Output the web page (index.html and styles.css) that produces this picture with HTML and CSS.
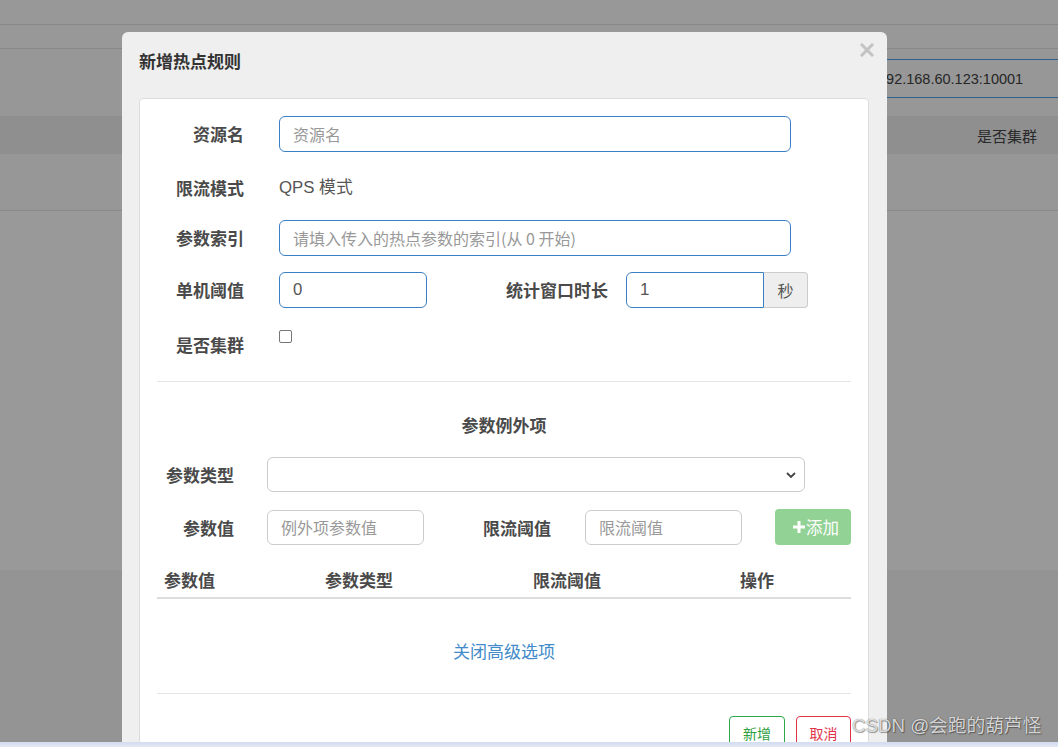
FILE: index.html
```html
<!DOCTYPE html>
<html lang="zh-CN">
<head>
<meta charset="utf-8">
<title>新增热点规则</title>
<link rel="stylesheet" href="styles.css">
</head>
<body>
<div class="page">
  <div class="bg-bar bg-top"></div>
  <div class="bg-bar bg-sub"></div>
  <div class="bg-toolbar">
    <div class="bg-ip">192.168.60.123:10001</div>
  </div>
  <div class="bg-thead"><span>是否集群</span></div>
  <div class="bg-row"></div>
  <div class="bg-panel"></div>
  <div class="bg-rest"></div>
</div>

<div class="modal">
  <div class="modal-header">
    <h4 class="modal-title">新增热点规则</h4>
    <svg class="close" width="14" height="14" viewBox="0 0 14 14"><path d="M2 2L12 12M12 2L2 12" stroke="#c3c3c3" stroke-width="3" stroke-linecap="square"/></svg>
  </div>
  <div class="card">
    <div class="form-row r1">
      <label class="lbl">资源名</label>
      <div class="input focus w512"><span class="ph">资源名</span></div>
    </div>
    <div class="form-row r2">
      <label class="lbl">限流模式</label>
      <span class="static">QPS 模式</span>
    </div>
    <div class="form-row r3">
      <label class="lbl">参数索引</label>
      <div class="input focus w512"><span class="ph">请填入传入的热点参数的索引(从 0 开始)</span></div>
    </div>
    <div class="form-row r4">
      <label class="lbl">单机阈值</label>
      <div class="input focus w148"><span class="val">0</span></div>
      <label class="lbl lbl-wide">统计窗口时长</label>
      <div class="input-group">
        <div class="input focus w138 grp"><span class="val">1</span></div>
        <span class="addon">秒</span>
      </div>
    </div>
    <div class="form-row r5">
      <label class="lbl">是否集群</label>
      <span class="checkbox"></span>
    </div>

    <hr class="divider d1">

    <div class="section-title">参数例外项</div>

    <div class="ex-row e1">
      <label class="lbl2">参数类型</label>
      <div class="select">
        <svg width="10" height="6" viewBox="0 0 10 6"><path d="M1 1L5 5L9 1" fill="none" stroke="#444" stroke-width="1.8"/></svg>
      </div>
    </div>
    <div class="ex-row e2">
      <label class="lbl2">参数值</label>
      <div class="input plain w157"><span class="ph">例外项参数值</span></div>
      <label class="lbl2 lbl2-wide">限流阈值</label>
      <div class="input plain w157"><span class="ph">限流阈值</span></div>
      <button class="btn-add"><svg width="12" height="12" viewBox="0 0 12 12"><path d="M4.5 0H7.5V4.5H12V7.5H7.5V12H4.5V7.5H0V4.5H4.5Z" fill="#fff"/></svg>添加</button>
    </div>

    <div class="table-head">
      <span>参数值</span>
      <span>参数类型</span>
      <span>限流阈值</span>
      <span>操作</span>
    </div>

    <div class="link-row"><a class="link">关闭高级选项</a></div>

    <hr class="divider d2">

    <div class="footer">
      <button class="btn btn-ok">新增</button>
      <button class="btn btn-cancel">取消</button>
    </div>
  </div>
</div>

<div class="watermark">CSDN @会跑的葫芦怪</div>
<div class="taskbar"></div>
</body>
</html>
```

FILE: styles.css
```css
html, body {
  margin: 0;
  padding: 0;
  width: 1058px;
  height: 747px;
  overflow: hidden;
}
body {
  position: relative;
  background: #949494;
  font-family: "Liberation Sans", "Noto Sans CJK SC", sans-serif;
  color: #333;
}

/* ---------- background page (dimmed) ---------- */
.page {
  display: flex;
  flex-direction: column;
  width: 1058px;
}
.bg-bar { background: #989898; }
.bg-top { height: 24px; border-bottom: 1px solid #878787; }
.bg-sub { height: 23px; border-bottom: 1px solid #878787; }
.bg-toolbar {
  height: 67px;
  background: #979797;
  display: flex;
  justify-content: flex-end;
  align-items: flex-start;
}
.bg-ip {
  margin-top: 10px;
  width: 180px;
  height: 37px;
  border-top: 1px solid #2f5f8e;
  border-bottom: 1px solid #2f5f8e;
  padding-left: 10px;
  display: flex;
  align-items: center;
  font-size: 14.5px;
  color: #262626;
}
.bg-thead {
  height: 38px;
  background: #8f8f90;
  display: flex;
  justify-content: flex-end;
  align-items: center;
  padding-right: 21px;
  font-size: 15px;
  color: #2a2a2a;
}
.bg-row {
  height: 56px;
  background: #979797;
  border-bottom: 1px solid #898989;
}
.bg-panel {
  height: 359px;
  background: #999999;
}
.bg-rest {
  height: 176px;
  background: #949494;
}

/* ---------- modal ---------- */
.modal {
  position: absolute;
  left: 122px;
  top: 32px;
  width: 765px;
  height: 715px;
  overflow: hidden;
  background: #efefef;
  border-radius: 6px 6px 0 0;
}
.modal-header {
  height: 66px;
  box-sizing: border-box;
  padding: 11px 13px 0 17px;
  display: flex;
  justify-content: space-between;
  align-items: flex-start;
}
.modal-title {
  margin: 6px 0 0 0;
  font-family: "Noto Sans CJK SC", sans-serif;
  font-size: 17px;
  line-height: 24px;
  font-weight: 700;
  color: #333;
}
.close { margin-top: 0; }

.card {
  margin: 0 18px 0 17px;
  height: 700px;
  background: #fff;
  border: 1px solid #dcdcdc;
  border-radius: 4px;
  padding: 17px 17px 0 17px;
}

/* ---------- top form ---------- */
.form-row {
  display: flex;
  align-items: center;
  height: 36px;
}
.r2 { margin-top: 18px; }
.r3 { margin-top: 14px; }
.r4 { margin-top: 16px; }
.r5 { margin-top: 19px; align-items: flex-start; }

.lbl {
  width: 87px;
  flex: none;
  text-align: right;
  margin-right: 35px;
  font-family: "Noto Sans CJK SC", sans-serif;
  font-size: 17px;
  font-weight: 700;
  color: #4a4a4a;
  line-height: 36px;
}
.lbl-wide {
  width: 181px;
  margin-right: 18px;
}
.static {
  font-size: 16.8px;
  color: #555;
  line-height: 36px;
}

.input {
  box-sizing: border-box;
  height: 36px;
  border: 1px solid #ccc;
  border-radius: 6px;
  padding: 0 13px;
  display: flex;
  align-items: center;
  background: #fff;
  font-size: 16.8px;
  flex: none;
}
.input.focus { border-color: #3c7fc4; }
.input.plain { height: 35px; }
.w512 { width: 512px; }
.w148 { width: 148px; }
.w138 { width: 138px; }
.w157 { width: 157px; }
.ph { color: #999; font-family: "Noto Sans CJK SC", sans-serif; font-size: 16px; }
.val { color: #555; }

.input-group { display: flex; }
.input.grp { border-radius: 6px 0 0 6px; }
.addon {
  box-sizing: border-box;
  width: 44px;
  height: 36px;
  background: #eee;
  border: 1px solid #ccc;
  border-left: 0;
  border-radius: 0 4px 4px 0;
  display: flex;
  align-items: center;
  justify-content: center;
  font-family: "Noto Sans CJK SC", sans-serif;
  font-size: 16px;
  color: #555;
}

.checkbox {
  margin-top: 3px;
  width: 13px;
  height: 13px;
  box-sizing: border-box;
  border: 1px solid #767676;
  border-radius: 2px;
  background: #fff;
}

.divider {
  margin: 0;
  border: 0;
  border-top: 1px solid #e5e5e5;
}
.d1 { margin-top: 18px; }

.section-title {
  margin-top: 31px;
  text-align: center;
  font-family: "Noto Sans CJK SC", sans-serif;
  font-size: 17px;
  line-height: 24px;
  font-weight: 700;
  color: #4a4a4a;
}

/* ---------- exception rows ---------- */
.ex-row {
  display: flex;
  align-items: center;
}
.e1 { margin-top: 20px; height: 35px; }
.e2 { margin-top: 17px; height: 36px; }
.lbl2 {
  width: 77px;
  flex: none;
  text-align: right;
  margin-right: 33px;
  font-family: "Noto Sans CJK SC", sans-serif;
  font-size: 17px;
  font-weight: 700;
  color: #4a4a4a;
}
.lbl2-wide { width: 127px; margin-right: 34px; }
.select {
  box-sizing: border-box;
  width: 538px;
  height: 35px;
  border: 1px solid #ccc;
  border-radius: 6px;
  display: flex;
  align-items: center;
  justify-content: flex-end;
  padding-right: 8px;
}
.btn-add {
  margin-left: 33px;
  width: 77px;
  height: 36px;
  border: 0;
  border-radius: 4px;
  background: #92d294;
  color: #fff;
  font-family: "Noto Sans CJK SC", sans-serif;
  font-size: 16.5px;
  display: flex;
  align-items: center;
  justify-content: center;
  gap: 1px;
  padding: 0 0 0 6px;
}

/* ---------- table ---------- */
.table-head {
  margin-top: 16px;
  height: 36px;
  display: grid;
  grid-template-columns: 161px 208px 207px 118px;
  align-items: center;
  border-bottom: 2px solid #ddd;
  font-family: "Noto Sans CJK SC", sans-serif;
  font-size: 17px;
  font-weight: 700;
  color: #4a4a4a;
}
.table-head span { padding-left: 7px; }

.link-row {
  margin-top: 40px;
  text-align: center;
  line-height: 24px;
}
.link {
  font-family: "Noto Sans CJK SC", sans-serif;
  font-size: 17px;
  color: #428bca;
}
.d2 { margin-top: 28px; }

.footer {
  margin-top: 22px;
  display: flex;
  justify-content: flex-end;
  gap: 11px;
}
.btn {
  box-sizing: border-box;
  height: 34px;
  background: #fff;
  border-radius: 4px;
  font-family: "Noto Sans CJK SC", sans-serif;
  font-size: 14px;
  padding: 0;
}
.btn-ok { width: 56px; border: 1px solid #2aa84a; color: #2e9f3e; }
.btn-cancel { width: 55px; border: 1px solid #e0344a; color: #e0344a; }

/* ---------- overlays ---------- */
.watermark {
  position: absolute;
  left: 852px;
  top: 713px;
  font-family: "Liberation Sans", "Noto Sans CJK SC", sans-serif;
  font-size: 18.7px;
  line-height: 26px;
  color: rgba(255, 255, 255, 0.8);
  text-shadow: 0 0 1px rgba(0,0,0,0.6), 1px 1px 1px rgba(0,0,0,0.35);
  white-space: nowrap;
}
.taskbar {
  position: absolute;
  left: 0;
  right: 0;
  top: 742px;
  height: 5px;
  background: linear-gradient(#d2dcf0, #e2e8f5);
}
```
